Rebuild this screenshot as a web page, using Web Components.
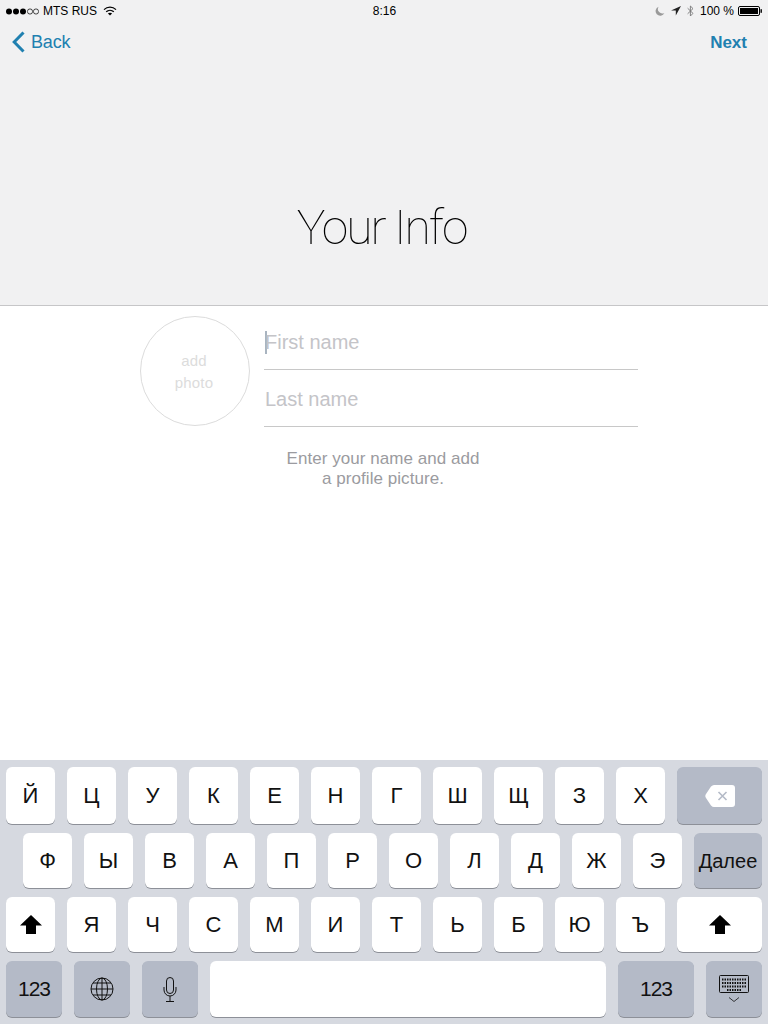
<!DOCTYPE html>
<html lang="en">
<head>
<meta charset="utf-8">
<title>Your Info</title>
<style>
    html, body { margin: 0; height: 100%; }
    body {
        display: flex;
        flex-direction: column;
        width: 768px;
        height: 1024px;
        overflow: hidden;
        background: #fff;
        font-family: "Liberation Sans", Arial, sans-serif;
    }
</style>
</head>
<body>
<info-header></info-header>
<name-form></name-form>
<ios-keyboard></ios-keyboard>

<script>
// Status bar + nav + big title
class InfoHeader extends HTMLElement {
    constructor() {
        super();
        this.attachShadow({ mode: "open" });
        this.shadowRoot.innerHTML = `
            <style>
                :host {
                    display: flex;
                    flex-direction: column;
                    height: 305px;
                    flex: none;
                    background: #f1f1f2;
                    border-bottom: 1px solid #c6c6c8;
                    color: #000;
                }
                .status {
                    display: grid;
                    grid-template-columns: 1fr auto 1fr;
                    align-items: center;
                    height: 22px;
                    padding: 0 5px 0 6px;
                    font-size: 12px;
                }
                .left, .right { display: flex; align-items: center; }
                .left { gap: 4px; }
                .right { justify-content: flex-end; gap: 6px; }
                .left svg:last-child { margin-left: 2px; }
                .nav {
                    display: flex;
                    justify-content: space-between;
                    align-items: center;
                    height: 40px;
                    padding: 0 21px 0 12px;
                    color: #2080b0;
                    font-size: 18px;
                }
                .back { display: flex; align-items: center; gap: 6px; }
                .back span { letter-spacing: -0.15px; }
                .next { padding-top: 1px; font-size: 17px; font-weight: bold; }
                h1 {
                    margin: 0;
                    padding: 142px 5px 0 0;
                    text-align: center;
                    font: 100 48px/48px Roboto, "Liberation Sans", sans-serif;
                    letter-spacing: -2px;
                    color: #000;
                    will-change: transform;
                }
            </style>
            <div class="status">
                <div class="left">
                    <svg width="33" height="7" viewBox="0 0 33 7">
                        <circle cx="3" cy="3.5" r="3" fill="#000"/>
                        <circle cx="10" cy="3.5" r="3" fill="#000"/>
                        <circle cx="17" cy="3.5" r="3" fill="#000"/>
                        <circle cx="24" cy="3.5" r="2.6" fill="none" stroke="#000" stroke-width=".7"/>
                        <circle cx="30" cy="3.5" r="2.6" fill="none" stroke="#000" stroke-width=".7"/>
                    </svg>
                    <span>MTS RUS</span>
                    <svg width="14" height="10" viewBox="0 0 14 10" fill="none" stroke="#000" stroke-width="1.3">
                        <path d="M1 3.6C4.4.4 9.6.4 13 3.6"/>
                        <path d="M3.2 5.8c2.2-2 5.4-2 7.6 0"/>
                        <path d="M7 9.6 4.9 7.6c1.2-1 3-1 4.2 0z" fill="#000" stroke="none"/>
                    </svg>
                </div>
                <span>8:16</span>
                <div class="right">
                    <svg width="10" height="10" viewBox="0 0 10 10"><path d="M3.6.8a4.6 4.6 0 1 0 5.8 6.2A4.4 4.4 0 0 1 3.6.8z" fill="#9a9a9a"/></svg>
                    <svg width="10" height="10" viewBox="0 0 10 10"><path d="M10 0 0 4.6h4.8V9.6z" fill="#222"/></svg>
                    <svg width="7" height="12" viewBox="0 0 7 12" fill="none" stroke="#777" stroke-width=".9"><path d="M.6 3.2 6 8.4 3.4 11V1L6 3.6.6 8.8"/></svg>
                    <span>100 %</span>
                    <svg width="25" height="10" viewBox="0 0 25 10" style="margin-left:-2px">
                        <rect x=".5" y=".5" width="21" height="9" rx="1.5" fill="none" stroke="#000"/>
                        <rect x="2" y="2" width="18" height="6" fill="#000"/>
                        <rect x="22.5" y="3.2" width="1.4" height="3.6" fill="#000"/>
                    </svg>
                </div>
            </div>
            <div class="nav">
                <div class="back">
                    <svg width="13" height="22" viewBox="0 0 13 22" fill="none" stroke="#2080b0" stroke-width="3"><path d="M11.5 1.5 2.2 11l9.3 9.5"/></svg>
                    <span>Back</span>
                </div>
                <span class="next">Next</span>
            </div>
            <h1>Your Info</h1>
        `;
    }
}

// Photo circle, the two name fields and the hint under them
class NameForm extends HTMLElement {
    constructor() {
        super();
        this.attachShadow({ mode: "open" });
        this.shadowRoot.innerHTML = `
            <style>
                :host {
                    display: flex;
                    flex-direction: column;
                    flex: 1;
                    align-items: center;
                    padding-top: 10px;
                }
                .row {
                    display: flex;
                    width: 498px;
                    gap: 14px;
                    margin-left: 10px;
                }
                .photo {
                    box-sizing: border-box;
                    flex: none;
                    display: flex;
                    align-items: center;
                    justify-content: center;
                    width: 110px;
                    height: 110px;
                    border: 1px solid #dcdcdc;
                    border-radius: 50%;
                    color: #dcdcdc;
                    font-size: 15px;
                    letter-spacing: 0.2px;
                    line-height: 22px;
                    text-align: center;
                }
                .photo span { padding: 2px 2px 0 0; }
                .fields { flex: 1; }
                .field {
                    box-sizing: border-box;
                    display: flex;
                    align-items: center;
                    height: 54px;
                    padding-left: 1px;
                    border-bottom: 1px solid #c8c8c8;
                    color: #c4c4c8;
                    font-size: 20px;
                }
                .field.first { margin-bottom: 3px; }
                .caret {
                    width: 2px;
                    height: 23px;
                    margin-right: -2px;
                    background: #a9b4c0;
                }
                .hint {
                    margin: 22px 2px 0 0;
                    color: #9b9ba0;
                    font-size: 17px;
                    letter-spacing: 0.05px;
                    line-height: 20px;
                    text-align: center;
                }
            </style>
            <div class="row">
                <div class="photo"><span>add<br>photo</span></div>
                <div class="fields">
                    <div class="field first"><span class="caret"></span><span>First name</span></div>
                    <div class="field"><span>Last name</span></div>
                </div>
            </div>
            <p class="hint">Enter your name and add<br>a profile picture.</p>
        `;
    }
}

// One key. Pass the label or icon through the slot
class KbKey extends HTMLElement {
    constructor() {
        super();
        this.attachShadow({ mode: "open" });
        this.shadowRoot.innerHTML = `
            <style>
                :host {
                    display: flex;
                    align-items: center;
                    justify-content: center;
                    flex: none;
                    width: var(--key-w, 49px);
                    border-radius: 6px;
                    background: #fff;
                    box-shadow: 0 1px 0 #8d9098;
                    color: #111;
                    font-size: 22px;
                }
                :host([dark]) { background: #b4bac7; }
            </style>
            <slot></slot>
        `;
    }
}

const SHIFT = `<svg width="22" height="20" viewBox="0 0 22 20"><path d="M11 0 22 10.5H16V19H6V10.5H0z" fill="#000"/></svg>`;

// Russian keyboard, rows built from the letter lists
class IosKeyboard extends HTMLElement {
    constructor() {
        super();
        this.attachShadow({ mode: "open" });
        const keys = (letters) => [...letters].map((l) => `<kb-key>${l}</kb-key>`).join("");
        this.shadowRoot.innerHTML = `
            <style>
                :host {
                    box-sizing: border-box;
                    display: grid;
                    grid-template-rows: 57px 55px 55px 56px;
                    row-gap: 9px;
                    flex: none;
                    height: 264px;
                    padding: 7px 6px 0;
                    background: #d6d9e0;
                }
                .row { display: flex; gap: 12px; }
                .indent { padding-left: 17px; }
                .b85 { --key-w: 85px; }
                .b68 { --key-w: 68px; }
                .b56 { --key-w: 56px; }
                .b76 { --key-w: 76px; }
                .space { --key-w: 396px; }
                .label { font-size: 21px; letter-spacing: -1px; }
                .done { font-size: 20px; padding-top: 1px; }
            </style>
            <div class="row">
                ${keys("ЙЦУКЕНГШЩЗХ")}
                <kb-key class="b85" dark>
                    <svg width="30" height="22" viewBox="0 0 30 22">
                        <path d="M9 0H27a3 3 0 0 1 3 3V19a3 3 0 0 1-3 3H9Q7.5 22 6 20.5L1 13Q-.4 11 1 9L6 1.5Q7.5 0 9 0z" fill="#fff"/>
                        <path d="M13.5 7l8 8M21.5 7l-8 8" stroke="#b4bac7" stroke-width="1.6"/>
                    </svg>
                </kb-key>
            </div>
            <div class="row indent">
                ${keys("ФЫВАПРОЛДЖЭ")}
                <kb-key class="b68 done" dark>Далее</kb-key>
            </div>
            <div class="row">
                <kb-key>${SHIFT}</kb-key>
                ${keys("ЯЧСМИТЬБЮЪ")}
                <kb-key class="b85">${SHIFT}</kb-key>
            </div>
            <div class="row">
                <kb-key class="b56 label" dark>123</kb-key>
                <kb-key class="b56" dark>
                    <svg width="24" height="24" viewBox="0 0 24 24" fill="none" stroke="#111" stroke-width="1">
                        <circle cx="12" cy="12" r="11"/>
                        <ellipse cx="12" cy="12" rx="5.5" ry="11"/>
                        <path d="M12 1V23M1 12H23M3 6H21M3 18H21"/>
                    </svg>
                </kb-key>
                <kb-key class="b56" dark>
                    <svg width="14" height="25" viewBox="0 0 14 25" fill="none" stroke="#111" stroke-width="1">
                        <rect x="3.5" y=".5" width="7" height="16" rx="3.5"/>
                        <path d="M1 10V13a6 6 0 0 0 12 0V10M7 19V24M3 24.5H11"/>
                    </svg>
                </kb-key>
                <kb-key class="space"></kb-key>
                <kb-key class="b76 label" dark>123</kb-key>
                <kb-key class="b56" dark>
                    <svg width="30" height="28" viewBox="0 0 30 28" fill="none" stroke="#111">
                        <rect x=".5" y=".5" width="29" height="17" rx="1"/>
                        <path d="M3 4.5H27M3 8H27M3 11.5H27M8 15H22" stroke-width="2" stroke-dasharray="1.5 1"/>
                        <path d="M10 22.5 15 26.5 20 22.5" stroke-width=".8"/>
                    </svg>
                </kb-key>
            </div>
        `;
    }
}

customElements.define("info-header", InfoHeader);
customElements.define("name-form", NameForm);
customElements.define("kb-key", KbKey);
customElements.define("ios-keyboard", IosKeyboard);
</script>
</body>
</html>
